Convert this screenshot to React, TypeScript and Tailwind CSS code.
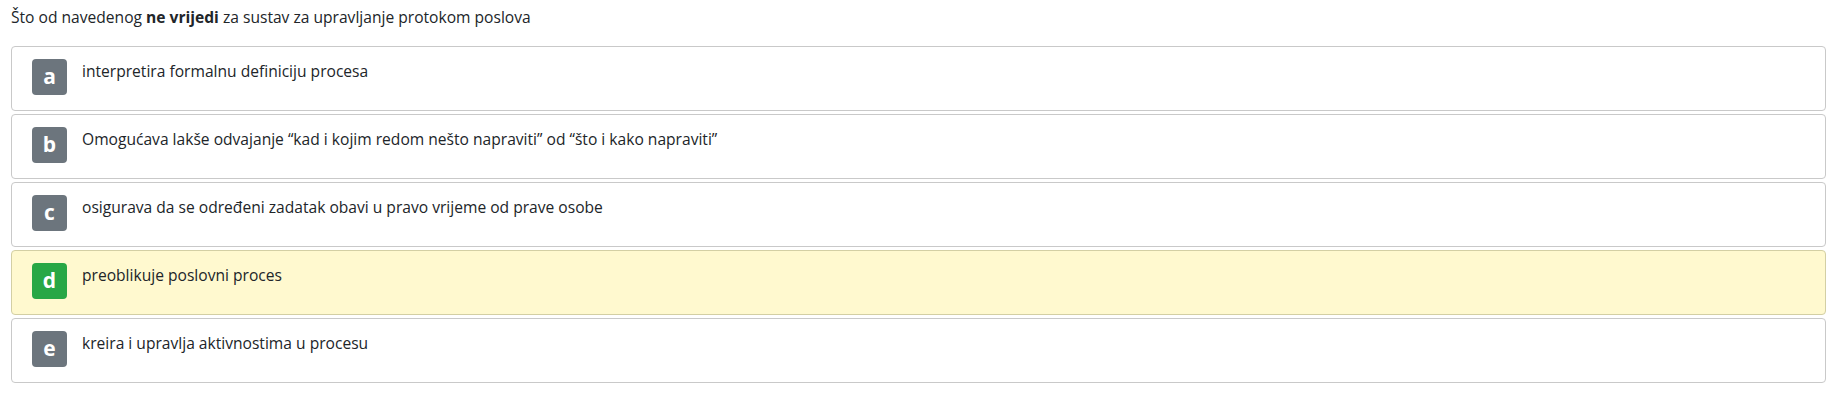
export default function App() {
  const options = [
    { key: 'a', text: 'interpretira formalnu definiciju procesa' },
    { key: 'b', text: 'Omogućava lakše odvajanje “kad i kojim redom nešto napraviti” od “što i kako napraviti”' },
    { key: 'c', text: 'osigurava da se određeni zadatak obavi u pravo vrijeme od prave osobe' },
    { key: 'd', text: 'preoblikuje poslovni proces', correct: true },
    { key: 'e', text: 'kreira i upravlja aktivnostima u procesu' },
  ];

  return (
    <div className="min-h-[400px] bg-white text-[#212529] font-['Open_Sans',sans-serif]">
      <p className="pl-[11px] pt-[5px] text-[15.6px] leading-[24px]">
        Što od navedenog <strong className="font-bold">ne vrijedi</strong> za sustav za upravljanje protokom poslova
      </p>

      <div className="ml-[11px] mr-[13px] mt-[17px]">
        {options.map((opt) => (
          <div
            key={opt.key}
            className={
              opt.correct
                ? 'mb-[3px] flex h-[65px] items-start rounded-[4px] border border-[#d3cfa4] bg-[#fff9cf] pl-[20px] pt-[12px]'
                : 'mb-[3px] flex h-[65px] items-start rounded-[4px] border border-[#c9c9c9] bg-white pl-[20px] pt-[12px]'
            }
          >
            <div
              className={
                opt.correct
                  ? 'flex h-[36px] w-[35px] shrink-0 items-center justify-center rounded-[4px] bg-[#28a745] text-[21px] font-bold text-white'
                  : 'flex h-[36px] w-[35px] shrink-0 items-center justify-center rounded-[4px] bg-[#6c757d] text-[21px] font-bold text-white'
              }
            >
              {opt.key}
            </div>
            <div className="ml-[15px] text-[15.6px] leading-[24px]">{opt.text}</div>
          </div>
        ))}
      </div>
    </div>
  );
}
